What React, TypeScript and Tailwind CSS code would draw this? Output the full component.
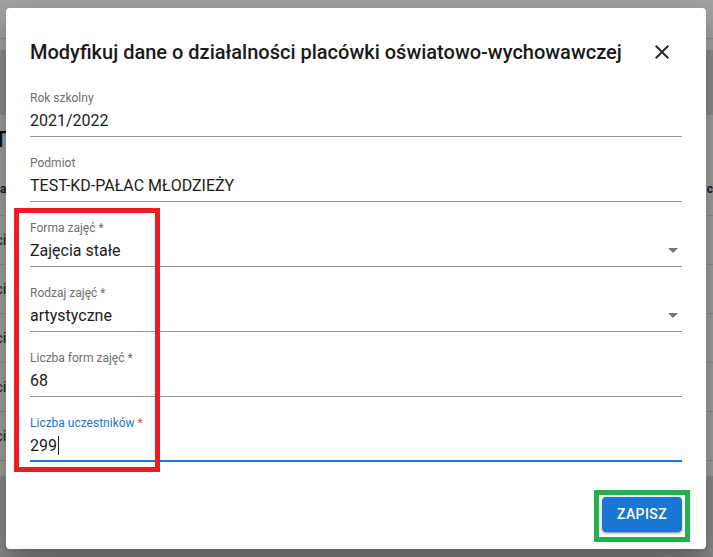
import React from 'react';

type Field = {
  label: string;
  value: string;
  required?: boolean;
  select?: boolean;
  focused?: boolean;
};

const FIELDS: Field[] = [
  { label: 'Rok szkolny', value: '2021/2022' },
  { label: 'Podmiot', value: 'TEST-KD-PAŁAC MŁODZIEŻY' },
  { label: 'Forma zajęć', value: 'Zajęcia stałe', required: true, select: true },
  { label: 'Rodzaj zajęć', value: 'artystyczne', required: true, select: true },
  { label: 'Liczba form zajęć', value: '68', required: true },
  { label: 'Liczba uczestników', value: '299', required: true, focused: true },
];

const BG_ROWS = ['ci', 'ci', 'ci', 'ci', 'ci'];

function FormField({ field }: { field: Field }) {
  return (
    <div className="flex flex-col">
      <div
        className={`mt-[2px] h-[15px] text-[12px] leading-[15px] ${
          field.focused ? 'text-[#1976d2]' : 'text-[#6e6e6e]'
        }`}
      >
        {field.label}
        {field.required && (
          <span className={field.focused ? 'text-[#e5533d]' : ''}> *</span>
        )}
      </div>
      <div
        className={`flex items-center pt-[3px] ${
          field.focused ? 'border-b-2 border-[#1976d2] pb-[3px]' : 'border-b border-[#949494] pb-[4px]'
        }`}
      >
        <div className="flex-1 h-[23px] flex items-center text-[16px] text-[#1c1c1c]">
          {field.value}
          {field.focused && <span className="ml-px w-px h-[19px] bg-[#1c1c1c]" />}
        </div>
        {field.select && (
          <svg width="10" height="5" viewBox="0 0 10 5" className="mr-[4px]">
            <path d="M0 0l5 5 5-5z" fill="#757575" />
          </svg>
        )}
      </div>
    </div>
  );
}

export default function App() {
  return (
    <div
      className="relative w-[713px] h-[557px] overflow-hidden bg-[#a3a3a3]"
      style={{ fontFamily: 'Roboto, "Noto Sans", sans-serif' }}
    >
      {/* Dimmed page behind the dialog */}
      <div className="flex flex-col">
        <div className="h-[39px] bg-[#a5a5a5] border-b border-[#8d8d8d]" />
        <div className="h-[11px] bg-[#a5a5a5]" />
        <div className="h-[65px] bg-[#8f8f8f]" />
        <div className="h-[48px] flex items-center text-[22px] font-medium text-[#111]">
          <span className="-ml-[6px]">T</span>
        </div>
        <div className="h-[53px] flex items-center justify-between text-[12px] font-bold text-[#222] border-b border-[#8f8f8f]">
          <span>a</span>
          <span className="-mr-[6px]">cz</span>
        </div>
        {BG_ROWS.map((txt, i) => (
          <div
            key={i}
            className="h-[49px] flex items-center text-[15px] text-[#222] border-b border-[#8f8f8f]"
          >
            <span className="-ml-[5px]">{txt}</span>
          </div>
        ))}
        <div className="h-[16px] border-b border-[#8f8f8f]" />
        <div className="h-[80px] bg-[#8c8c8c]" />
      </div>

      {/* Dialog */}
      <div className="absolute inset-0 pt-[8px] pl-[6px]">
        <div className="w-[700px] h-[541px] bg-white rounded-[4px] shadow-[0_11px_15px_-7px_rgba(0,0,0,0.2),0_24px_38px_3px_rgba(0,0,0,0.14),0_9px_46px_8px_rgba(0,0,0,0.12)] px-[24px] pt-[28px] flex flex-col">
          <div className="h-[32px] flex items-center justify-between pr-[8px]">
            <h2 className="text-[20px] font-medium text-[#1a1a1a]">
              Modyfikuj dane o działalności placówki oświatowo-wychowawczej
            </h2>
            <svg width="24" height="24" viewBox="0 0 24 24">
              <path
                d="M19 6.41 17.59 5 12 10.59 6.41 5 5 6.41 10.59 12 5 17.59 6.41 19 12 13.41 17.59 19 19 17.59 13.41 12z"
                fill="#2a2a2a"
              />
            </svg>
          </div>

          <div className="mt-[21px] flex flex-col gap-[17px]">
            {FIELDS.map((f) => (
              <FormField key={f.label} field={f} />
            ))}
          </div>

          <div className="mt-[35px] flex justify-end">
            <button className="h-[35px] w-[80px] rounded-[4px] bg-[#1976d2] text-white text-[14px] font-medium tracking-[0.4px] shadow-[0_3px_1px_-2px_rgba(0,0,0,0.2),0_2px_2px_0_rgba(0,0,0,0.14),0_1px_5px_0_rgba(0,0,0,0.12)]">
              ZAPISZ
            </button>
          </div>
        </div>
      </div>

      {/* Annotation frames */}
      <div className="absolute left-[14px] top-[208px] w-[146px] h-[264px] border-[5px] border-[#ed1c24]" />
      <div className="absolute left-[594px] top-[490px] w-[96px] h-[52px] border-[5px] border-[#22b14c]" />
    </div>
  );
}
